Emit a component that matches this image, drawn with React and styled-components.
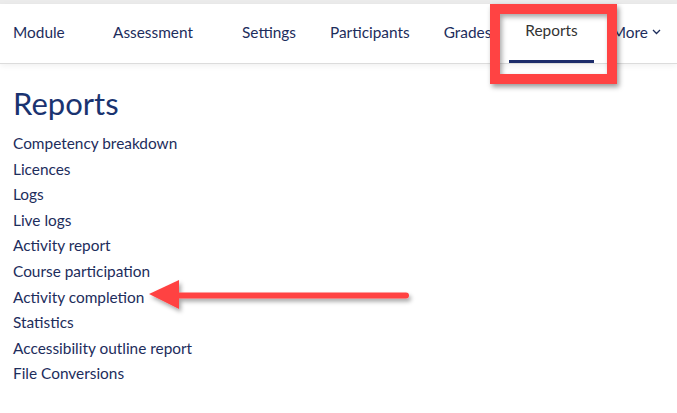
import React from 'react';
import styled, { createGlobalStyle } from 'styled-components';

const tabs = [
    { label: 'Module', width: 66 },
    { label: 'Assessment', width: 95 },
    { label: 'Settings' },
    { label: 'Participants' },
    { label: 'Grades' },
    { label: 'Reports', active: true },
    { label: 'More', more: true },
];

const reports = [
    'Competency breakdown',
    'Licences',
    'Logs',
    'Live logs',
    'Activity report',
    'Course participation',
    'Activity completion',
    'Statistics',
    'Accessibility outline report',
    'File Conversions',
];

export default function App() {
    return (
        <Page>
            <GlobalStyle />
            <TopStrip />
            <Nav>
                {tabs.map(tab => (
                    <Tab key={tab.label} $width={tab.width} $active={tab.active}>
                        {tab.label}
                        {tab.more && (
                            <svg width="9" height="6" viewBox="0 0 9 6">
                                <path d="M1 1l3.5 3.5L8 1" fill="none" stroke="currentColor" strokeWidth="1.3" />
                            </svg>
                        )}
                        {tab.active && <Highlight />}
                    </Tab>
                ))}
            </Nav>
            <Main>
                <Title>Reports</Title>
                <List>
                    {reports.map(item => (
                        <Item key={item}>{item}</Item>
                    ))}
                </List>
                <Arrow width="270" height="40" viewBox="0 0 270 40">
                    <defs>
                        <filter id="shadow" x="-10%" y="-50%" width="120%" height="200%">
                            <feDropShadow dx="2" dy="3" stdDeviation="2" floodColor="#000" floodOpacity="0.35" />
                        </filter>
                    </defs>
                    <g filter="url(#shadow)">
                        <path d="M28 17.5 H257" stroke="#ff4343" strokeWidth="6" strokeLinecap="round" />
                        <path d="M0 16 L30 2 L30 31 Z" fill="#ff4343" />
                    </g>
                </Arrow>
            </Main>
        </Page>
    );
}

const GlobalStyle = createGlobalStyle`
    body {
        margin: 0;
        background: #fff;
        font-family: Lato, "Open Sans", sans-serif;
    }
`;

const Page = styled.div`
    position: relative;
    width: 677px;
    height: 413px;
    overflow: hidden;
    background: #fff;
`;

const TopStrip = styled.div`
    height: 4px;
    background: #ebebeb;
`;

const Nav = styled.nav`
    position: relative;
    display: flex;
    align-items: stretch;
    gap: 34px;
    height: 59px;
    padding-left: 13px;
    background: #fff;
    border-bottom: 1px solid #dcdcdc;
    box-shadow: 0 2px 6px rgba(0, 0, 0, 0.06);
`;

const Tab = styled.div`
    position: relative;
    display: flex;
    align-items: center;
    gap: 4px;
    min-width: ${p => (p.$width ? `${p.$width}px` : 'auto')};
    padding-bottom: ${p => (p.$active ? '7px' : '4px')};
    font-size: 15.4px;
    color: ${p => (p.$active ? '#333' : '#1d2d5c')};
    white-space: nowrap;

    ${p => p.$active && `
        &::after {
            content: '';
            position: absolute;
            left: -16px;
            right: -16px;
            bottom: 0;
            height: 3px;
            background: #1d2d6b;
        }
    `}
`;

const Highlight = styled.div`
    position: absolute;
    left: -35px;
    right: -39px;
    top: 0;
    height: 80px;
    box-sizing: border-box;
    border: 10px solid #ff4343;
    box-shadow: 2px 3px 5px rgba(0, 0, 0, 0.4), inset 2px 3px 5px rgba(0, 0, 0, 0.35);
    pointer-events: none;
    z-index: 2;
`;

const Main = styled.main`
    position: relative;
    padding: 19px 13px 0;
`;

const Title = styled.h1`
    margin: 0 0 8px;
    font-size: 31px;
    font-weight: 400;
    line-height: 40px;
    color: #1a3370;
`;

const List = styled.ul`
    margin: 0;
    padding: 0;
    list-style: none;
`;

const Item = styled.li`
    font-size: 15.4px;
    line-height: 25.6px;
    color: #1d2d5c;
`;

const Arrow = styled.svg`
    position: absolute;
    left: 149px;
    top: 214px;
    overflow: visible;
`;
